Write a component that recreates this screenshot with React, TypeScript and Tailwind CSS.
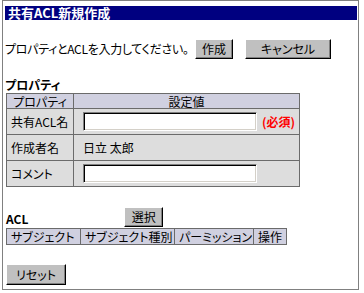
const FONT = "font-['MS_UI_Gothic','Noto_Sans_CJK_JP',sans-serif] [font-feature-settings:'palt']";

const BTN =
  "h-[20px] bg-[#c0c0c0] text-[12px] leading-none text-black border border-t-white border-l-white border-r-black border-b-black shadow-[inset_-1px_-1px_0_#808080] flex items-center justify-center";

const INPUT =
  "h-[19px] w-[174px] bg-white border border-t-[#808080] border-l-[#808080] border-r-white border-b-white shadow-[inset_1px_1px_0_#000,inset_-1px_-1px_0_#d4d0c8]";

const ACL_COLS = [
  { label: "サブジェクト", w: "w-[74px]" },
  { label: "サブジェクト種別", w: "w-[94px]" },
  { label: "パーミッション", w: "w-[79px]" },
  { label: "操作", w: "w-[33px]" },
];

export default function App() {
  return (
    <div className={`w-[364px] h-[293px] bg-white text-black text-[12px] ${FONT}`}>
      <div className="ml-[2px] w-[357px] h-[290px] border border-[#808080] pl-[2px] pr-[1px]">
        {/* ── Title bar ── */}
        <div className="mt-[5px] h-[14px] bg-[#000080] text-white font-bold text-[13px] leading-[14px] pl-[3px]">
          共有ACL新規作成
        </div>

        {/* ── Intro + actions ── */}
        <div className="mt-[19px] flex items-center h-[20px]">
          <span className="leading-none tracking-[-0.3px]">プロパティとACLを入力してください。</span>
          <button className={`${BTN} ml-auto w-[38px]`}>作成</button>
          <button className={`${BTN} ml-[12px] mr-[26px] w-[86px]`}>キャンセル</button>
        </div>

        {/* ── Properties ── */}
        <div className="mt-[20px] mb-[2px] h-[12px] font-bold leading-[12px]">プロパティ</div>
        <table className="ml-[1px] border-collapse border border-[#6b6b6b]">
          <tbody>
            <tr className="h-[15px] bg-[#d0d0e0] leading-[13px]">
              <td className="w-[67px] border border-[#6b6b6b] p-0 text-center">プロパティ</td>
              <td className="w-[226px] border border-[#6b6b6b] p-0 text-center">設定値</td>
            </tr>
            <tr className="h-[26px] bg-[#dddddd]">
              <td className="border border-[#6b6b6b] p-0 pl-[4px]">共有ACL名</td>
              <td className="border border-[#6b6b6b] p-0 pl-[9px]">
                <div className="flex items-center">
                  <div className={INPUT} />
                  <span className="ml-[5px] text-[#ff0000] font-bold">(必須)</span>
                </div>
              </td>
            </tr>
            <tr className="h-[26px] bg-[#dddddd]">
              <td className="border border-[#6b6b6b] p-0 pl-[4px]">作成者名</td>
              <td className="border border-[#6b6b6b] p-0 pl-[9px]">日立 太郎</td>
            </tr>
            <tr className="h-[26px] bg-[#dddddd]">
              <td className="border border-[#6b6b6b] p-0 pl-[4px]">コメント</td>
              <td className="border border-[#6b6b6b] p-0 pl-[9px]">
                <div className={INPUT} />
              </td>
            </tr>
          </tbody>
        </table>

        {/* ── ACL ── */}
        <div className="mt-[20px] flex items-center h-[20px] pl-[1px]">
          <span className="font-bold leading-[13px] mt-[3px]">ACL</span>
          <button className={`${BTN} ml-[96px] w-[39px]`}>選択</button>
        </div>
        <table className="ml-[1px] mt-[1px] border-collapse border border-[#6b6b6b]">
          <tbody>
            <tr className="h-[16px] bg-[#d0d0e0] leading-[14px]">
              {ACL_COLS.map((c) => (
                <td key={c.label} className={`${c.w} border border-[#6b6b6b] p-0 pl-[4px] whitespace-nowrap`}>
                  {c.label}
                </td>
              ))}
            </tr>
          </tbody>
        </table>

        <button className={`${BTN} mt-[19px] ml-[1px] w-[60px] h-[21px]`}>リセット</button>
      </div>
    </div>
  );
}
